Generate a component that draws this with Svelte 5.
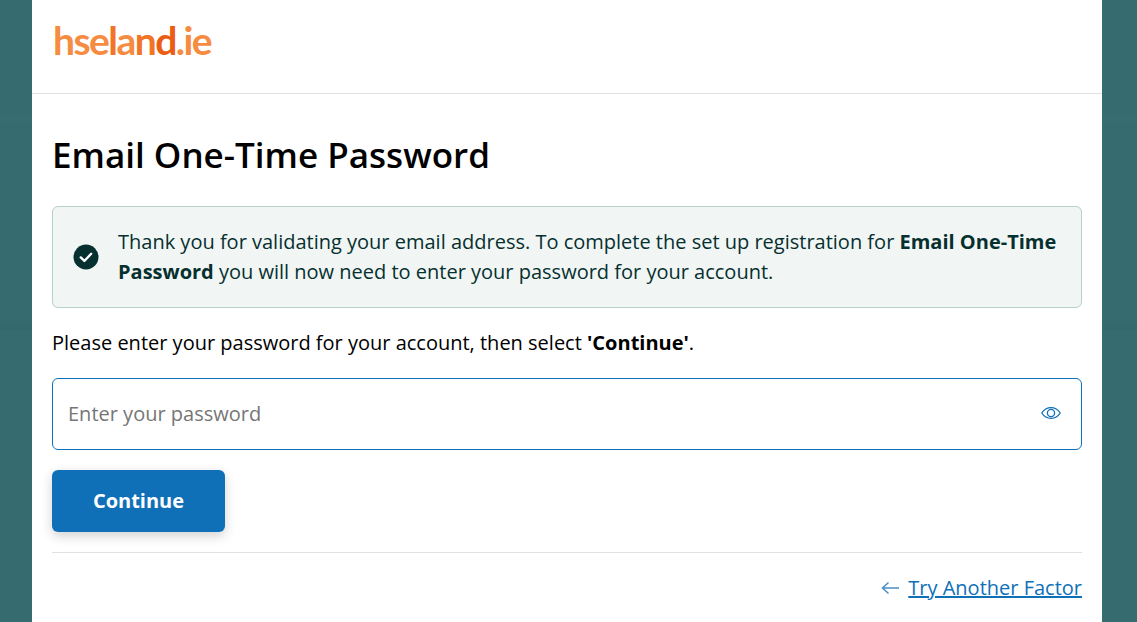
<script>
    let password = $state("");
</script>

<div class="page">
    <main class="card">
        <header class="logo-bar">
            <span class="logo">hse<span class="l">l</span>a<span class="n">n</span><span class="d">d</span>.ie</span>
        </header>

        <div class="content">
            <h1>Email One-Time Password</h1>

            <div class="notice">
                <svg class="check" width="26" height="26" viewBox="0 0 26 26">
                    <circle cx="13" cy="13" r="12.5" fill="#06302f" />
                    <path d="M7.8 13.4l3.6 3.6 6.8-7.2" fill="none" stroke="#fff" stroke-width="2.4" stroke-linecap="round" stroke-linejoin="round" />
                </svg>
                <p>Thank you for validating your email address. To complete the set up registration for <strong>Email One-Time Password</strong> you will now need to enter your password for your account.</p>
            </div>

            <p class="prompt">Please enter your password for your account, then select <strong>'Continue'</strong>.</p>

            <div class="field">
                <input type="password" placeholder="Enter your password" bind:value={password} />
                <svg class="eye" width="22" height="22" viewBox="0 0 22 22" fill="none" stroke="#0f70b7" stroke-width="1.3">
                    <path d="M1.8 11c2.2-3.5 5.4-5.3 9.2-5.3s7 1.8 9.2 5.3c-2.2 3.5-5.4 5.3-9.2 5.3s-7-1.8-9.2-5.3z" />
                    <circle cx="11" cy="11" r="3.6" />
                </svg>
            </div>

            <button class="continue">Continue</button>

            <hr />

            <div class="footer">
                <svg width="18" height="14" viewBox="0 0 18 14" fill="none" stroke="#4a8fc6" stroke-width="1.5">
                    <path d="M18 7H1.5M7.5 1.5L1.5 7l6 5.5" />
                </svg>
                <a href="#top">Try Another Factor</a>
            </div>
        </div>
    </main>
</div>

<style>
    :global(body) {
        margin: 0;
        background: #366b6f;
        font-family: "Open Sans", sans-serif;
    }
    .page {
        height: 622px;
        overflow: hidden;
        padding: 0 35px 0 32px;
        background: linear-gradient(
            #366b6f 0 116px,
            #386d71 116px 121px,
            #366b6f 121px 323px,
            #346a6d 323px 330px,
            #366b6f 330px
        );
    }
    .card {
        background: #fff;
        height: 622px;
    }
    .logo-bar {
        height: 93px;
        border-bottom: 1px solid #e1e1e1;
        padding-left: 21px;
        display: flex;
        align-items: flex-start;
    }
    .logo {
        font-family: Lato, sans-serif;
        font-weight: 700;
        font-size: 39px;
        line-height: 36px;
        letter-spacing: -1.55px;
        color: #f68b42;
        margin-top: 22px;
    }
    .l {
        color: #f27426;
    }
    .n {
        color: #f27426;
    }
    .d {
        color: #ec5d13;
    }
    .content {
        padding: 0 20px;
    }
    h1 {
        margin: 37px 0 0;
        font-size: 35px;
        line-height: 48px;
        font-weight: 600;
        color: #000;
    }
    .notice {
        margin-top: 27px;
        height: 102px;
        box-sizing: border-box;
        border: 1px solid #b6d0cb;
        border-radius: 6px;
        background: #f1f6f5;
        display: flex;
        align-items: center;
        gap: 19px;
        padding: 0 20px;
        color: #06302f;
    }
    .check {
        flex: none;
    }
    .notice p {
        margin: 0;
        font-size: 20px;
        line-height: 30px;
    }
    .prompt {
        margin: 20px 0 0;
        font-size: 20px;
        line-height: 30px;
        color: #000;
    }
    .field {
        margin-top: 20px;
        position: relative;
    }
    input {
        display: block;
        width: 100%;
        height: 72px;
        box-sizing: border-box;
        border: 1px solid #0f70b7;
        border-radius: 6px;
        padding: 0 60px 2px 15px;
        font-family: inherit;
        font-size: 20px;
        background: #fff;
    }
    input::placeholder {
        color: #767676;
        opacity: 1;
    }
    .eye {
        position: absolute;
        right: 20px;
        top: 24px;
    }
    .continue {
        display: block;
        margin-top: 20px;
        width: 173px;
        height: 62px;
        padding: 0 0 2px;
        border: none;
        border-radius: 6px;
        background: #0f70b7;
        color: #fff;
        font-family: inherit;
        font-size: 20px;
        font-weight: 700;
        box-shadow: 0 4px 12px rgba(0, 0, 0, 0.18);
    }
    hr {
        margin: 20px 0 0;
        border: none;
        border-top: 1px solid #e1e1e1;
    }
    .footer {
        margin-top: 20px;
        display: flex;
        justify-content: flex-end;
        align-items: center;
        gap: 9px;
    }
    a {
        font-size: 20px;
        line-height: 30px;
        color: #0f70b7;
    }
</style>
